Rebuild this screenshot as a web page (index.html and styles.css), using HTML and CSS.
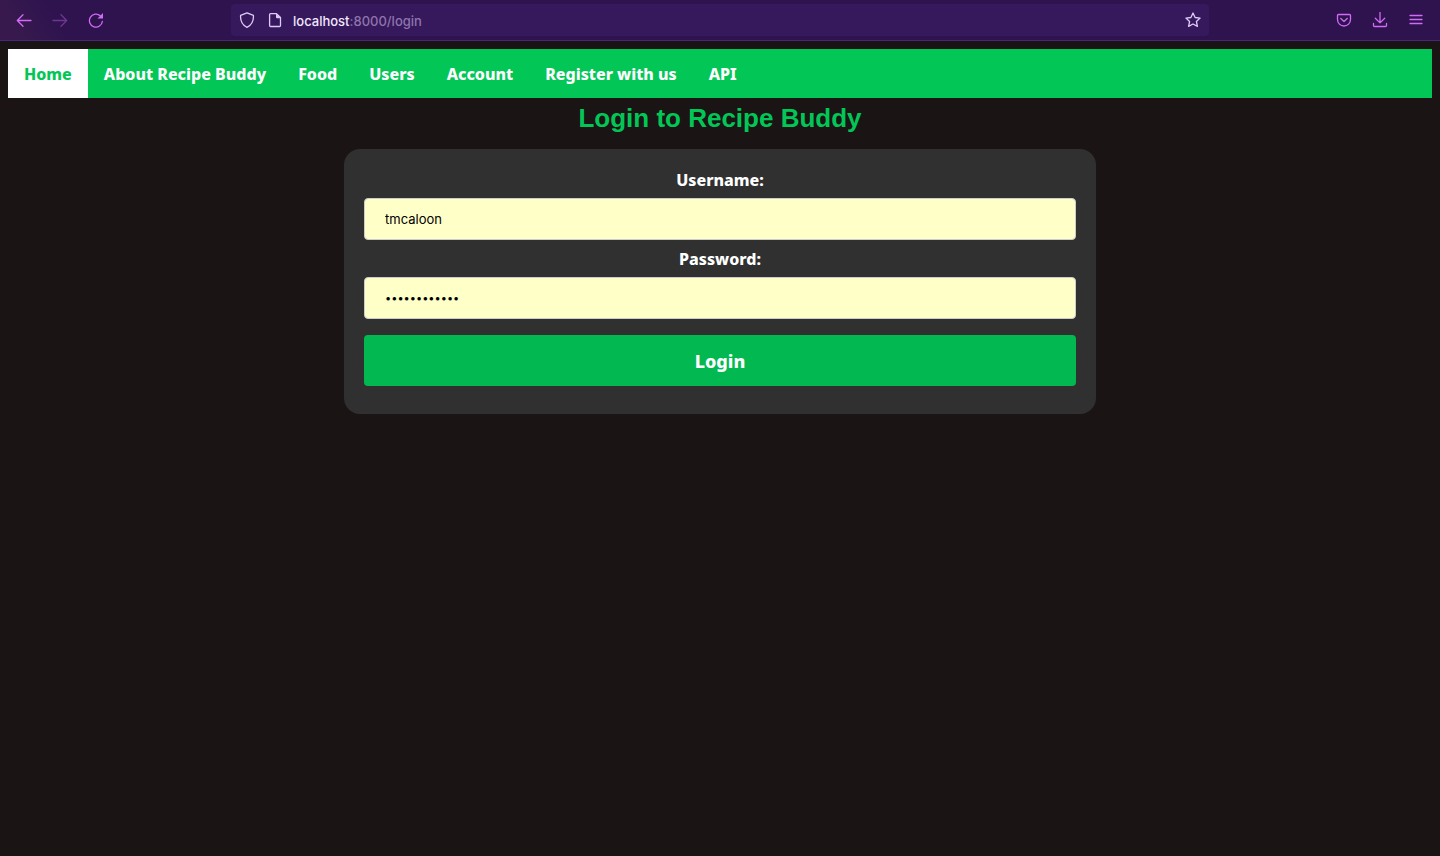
FILE: index.html
```html
<!DOCTYPE html>
<html lang="en">
<head>
<meta charset="utf-8">
<meta name="viewport" content="width=device-width, initial-scale=1">
<title>Login to Recipe Buddy</title>
<link rel="stylesheet" href="styles.css">
</head>
<body>
<header class="toolbar">
  <div class="toolbar-side">
    <button class="tool" type="button" aria-label="Back"><svg viewBox="0 0 16 16"><path d="M15 8.500H1.500M7 2.800 1.300 8.500 7 14.200"/></svg></button>
    <button class="tool" type="button" aria-label="Forward" disabled><svg viewBox="0 0 16 16"><path d="M1 8.500h13.500M9 2.800l5.700 5.700L9 14.200"/></svg></button>
    <button class="tool" type="button" aria-label="Reload"><svg viewBox="0 0 16 16"><path d="M14.400 9.300A6.500 6.500 0 1 1 12.300 3.800"/><path class="solid" d="M15 1v5.500H9.500z"/></svg></button>
  </div>
  <div class="address">
    <svg class="icon" viewBox="0 0 16 16"><path d="M8 .8 14.400 3.300C14.800 8.500 12.600 13 8 15.300 3.400 13 1.200 8.500 1.600 3.300z"/></svg>
    <svg class="icon" viewBox="0 0 16 16"><path d="M3.600 1.600H9.500L13.500 5.500V13.500a1 1 0 0 1-1 1H3.600a1 1 0 0 1-1-1V2.600a1 1 0 0 1 1-1z"/><path class="solid" d="M9 1.500 13.800 6.200H10a1 1 0 0 1-1-1z"/></svg>
    <span class="url"><span class="host">localhost</span>:8000/login</span>
    <button class="star" type="button" aria-label="Bookmark"><svg class="icon" viewBox="0 0 16 16"><path d="m8 1 2.100 4.500 5 .6-3.700 3.400 1 4.900-4.400-2.400-4.400 2.400 1-4.900L.9 6.100l5-.6z"/></svg></button>
  </div>
  <div class="toolbar-side toolbar-end">
    <button class="tool" type="button" aria-label="Save to Pocket"><svg viewBox="0 0 16 16"><path d="M2.500 2.500h11a1 1 0 0 1 1 1V7.500a6.500 6.500 0 0 1-13 0v-4a1 1 0 0 1 1-1zM4.800 6.500 8 9.500l3.200-3"/></svg></button>
    <button class="tool" type="button" aria-label="Downloads"><svg viewBox="0 0 16 16"><path d="M8 0v10.800M3.300 6.200 8 10.900l4.700-4.700M1.500 11.500v2a1 1 0 0 0 1 1h11a1 1 0 0 0 1-1v-2"/></svg></button>
    <button class="tool" type="button" aria-label="Menu"><svg viewBox="0 0 16 16"><path d="M2 3.500h12M2 7.500h12M2 11.500h12"/></svg></button>
  </div>
</header>
<main class="page">
  <nav class="nav">
    <a class="nav-link active" href="#home">Home</a>
    <a class="nav-link" href="#about">About Recipe Buddy</a>
    <a class="nav-link" href="#food">Food</a>
    <a class="nav-link" href="#users">Users</a>
    <a class="nav-link" href="#account">Account</a>
    <a class="nav-link" href="#register">Register with us</a>
    <a class="nav-link" href="#api">API</a>
  </nav>
  <h1 class="title">Login to Recipe Buddy</h1>
  <form class="card">
    <label class="label" for="username">Username:</label>
    <input class="field" id="username" type="text" value="tmcaloon" autocomplete="username">
    <label class="label" for="password">Password:</label>
    <input class="field password" id="password" type="password" value="recipebuddy1" autocomplete="current-password">
    <button class="submit" type="submit">Login</button>
  </form>
</main>
</body>
</html>
```
FILE: styles.css
```css
* {
  box-sizing: border-box;
}

body {
  margin: 0;
  background: #1b1415;
  color: #fff;
  font-family: "Noto Sans", "Open Sans", sans-serif;
  font-size: 16px;
}

.toolbar {
  display: flex;
  align-items: center;
  height: 41px;
  padding: 0 8px;
  background: linear-gradient(60deg, #37194d 0, #37194d 20px, #2e134f 60px);
  border-bottom: 1px solid #42297a;
}

.toolbar-side {
  display: flex;
  flex: 1;
  gap: 4px;
}

.toolbar-end {
  justify-content: flex-end;
}

.tool {
  display: grid;
  place-items: center;
  width: 32px;
  height: 32px;
  padding: 0;
  border: 0;
  background: none;
  color: #d26af5;
}

.tool:disabled {
  opacity: 0.4;
}

svg {
  display: block;
  width: 16px;
  height: 16px;
  fill: none;
  stroke: currentColor;
  stroke-width: 1.3;
  stroke-linecap: round;
  stroke-linejoin: round;
}

.solid {
  fill: currentColor;
  stroke: none;
}

.address {
  display: flex;
  align-items: center;
  gap: 12px;
  width: 70%;
  max-width: 978px;
  height: 32px;
  padding: 0 8px;
  border-radius: 4px;
  background: #35195c;
  color: #decaf5;
}

.url {
  flex: 1;
  margin-left: -2px;
  padding-top: 1px;
  font-family: Inter, sans-serif;
  font-size: 13px;
  font-weight: 500;
  color: #8f74ab;
}

.host {
  color: #f2e6ff;
}

.star {
  padding: 0;
  border: 0;
  background: none;
  color: inherit;
}

.page {
  padding: 8px;
}

.nav {
  display: flex;
  flex-wrap: wrap;
  background: #02c656;
}

.nav-link {
  padding: 15px 16px 13px;
  line-height: 21px;
  font-weight: 800;
  color: #fff;
  text-decoration: none;
}

.nav-link.active {
  background: #fff;
  color: #02c656;
}

.title {
  margin: 0;
  padding: 5px 0 16px;
  font-family: "Liberation Sans", Arial, sans-serif;
  font-size: 26px;
  line-height: 30px;
  text-align: center;
  color: #02c656;
}

.card {
  width: calc(50% + 40px);
  margin: 0 auto;
  padding: 20px;
  border-radius: 16px;
  background: #303030;
}

.label {
  display: block;
  padding-top: 2px;
  line-height: 19px;
  font-weight: 800;
  text-align: center;
}

.field {
  display: block;
  width: 100%;
  height: 42px;
  margin: 8px 0;
  padding: 0 20px;
  border: 1px solid #ccc;
  border-radius: 4px;
  background: #ffffc8;
  color: #000;
  font-family: Inter, sans-serif;
  font-size: 13px;
}

.password {
  font-size: 11px;
}

.submit {
  display: block;
  width: 100%;
  margin: 16px 0 8px;
  padding: 15px 20px 13px;
  border: 0;
  border-radius: 4px;
  background: #01b950;
  color: #fff;
  font-family: inherit;
  font-size: 18px;
  font-weight: 800;
  line-height: 23px;
}
```
